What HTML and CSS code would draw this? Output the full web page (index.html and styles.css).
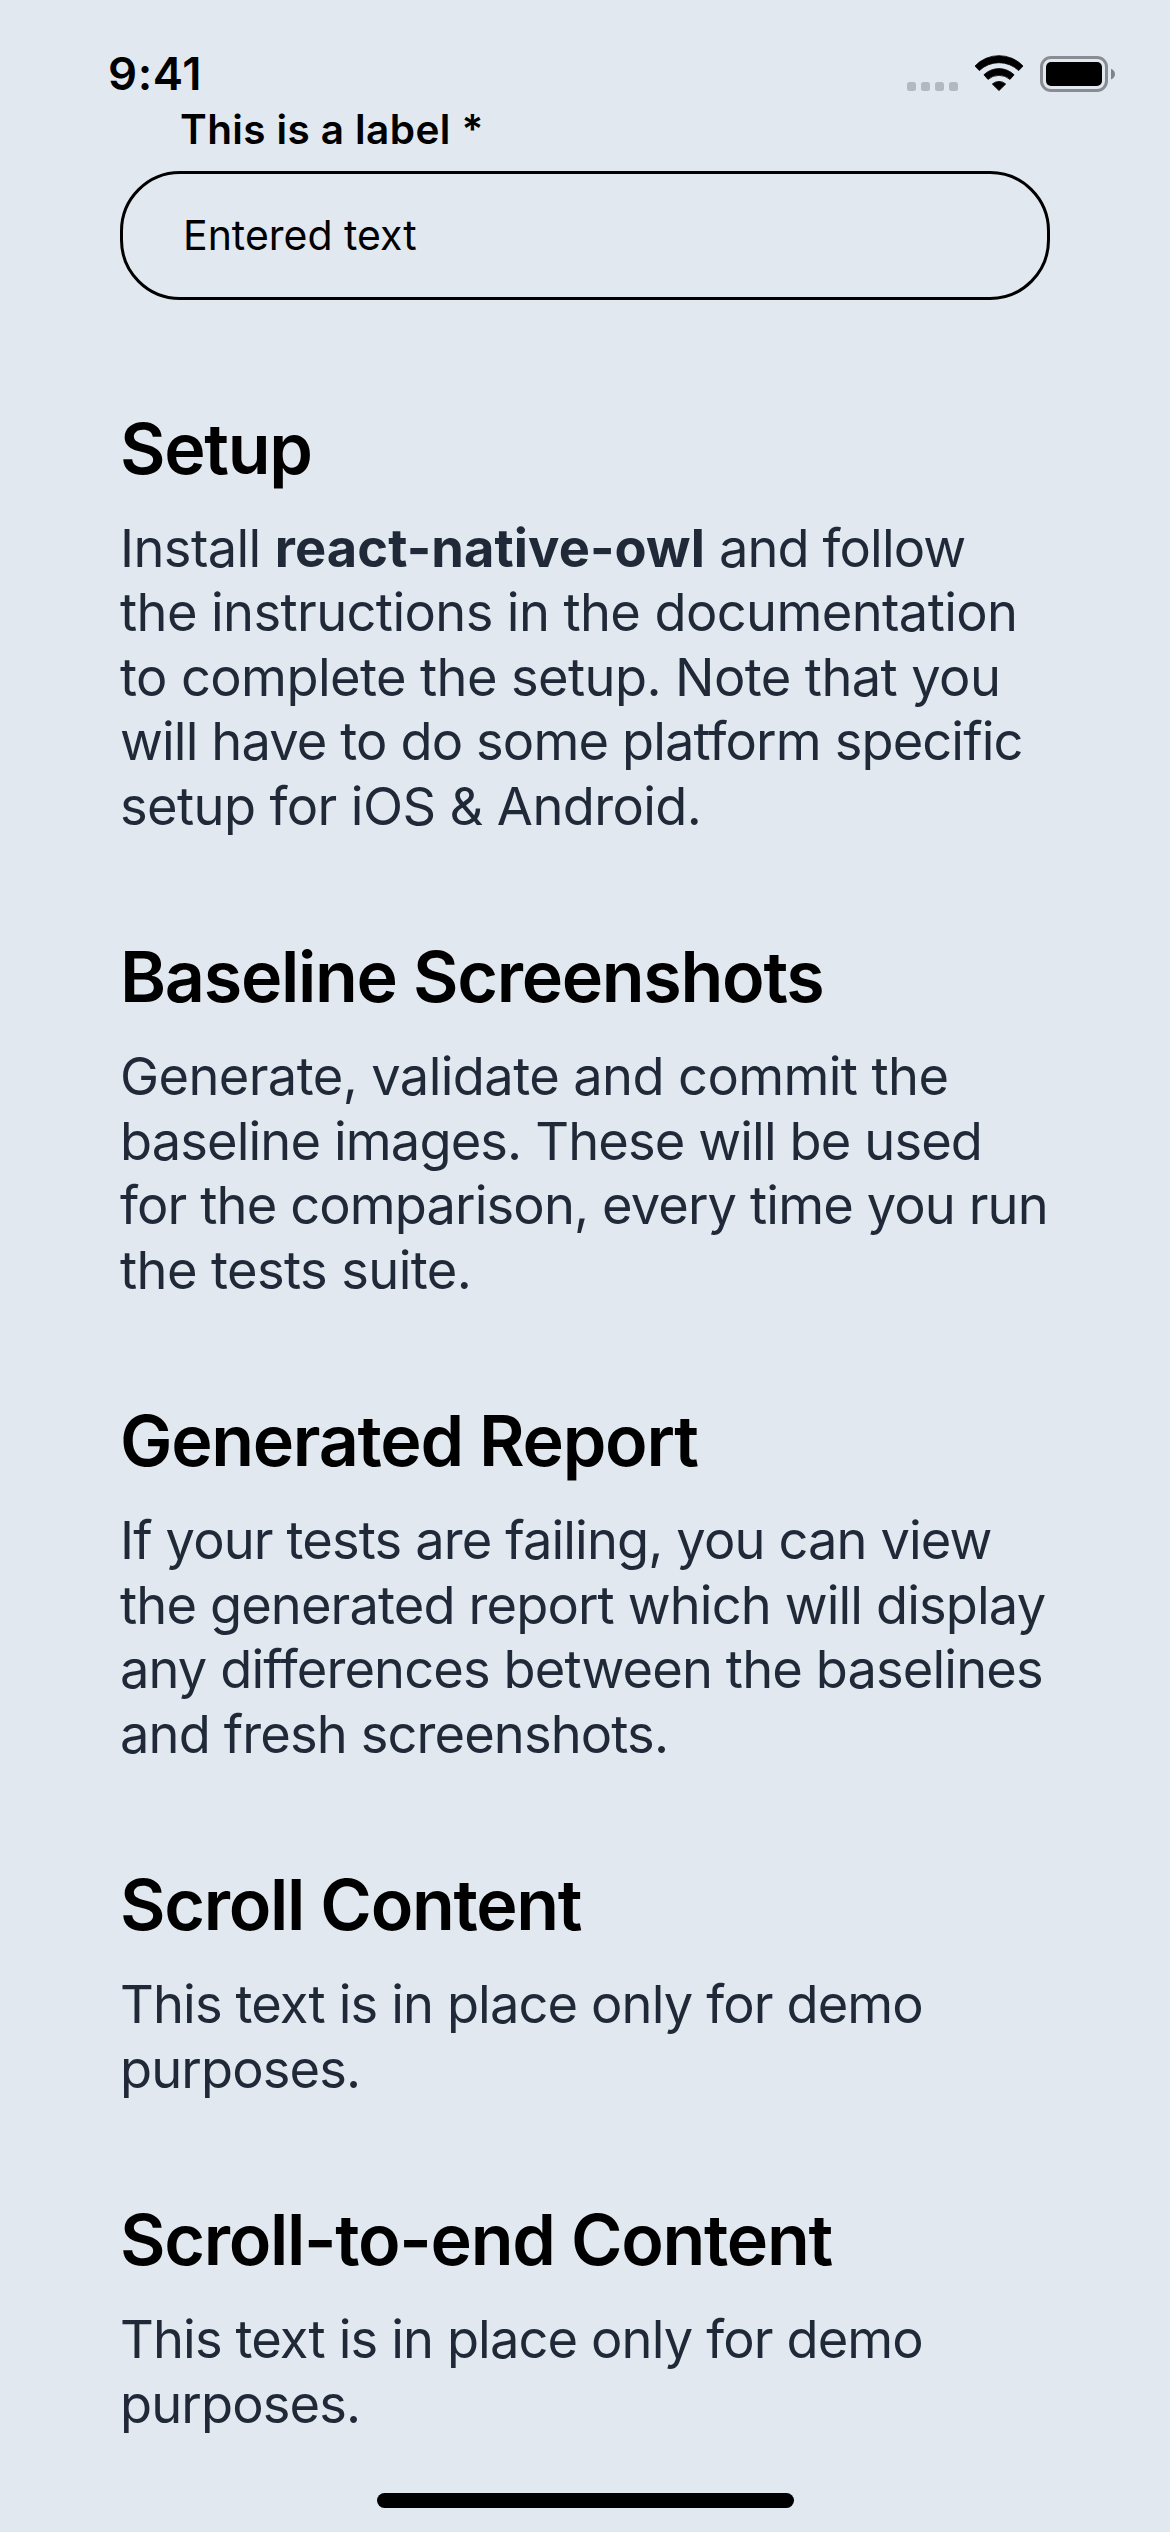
FILE: index.html
```html
<!DOCTYPE html>
<html lang="en">
<head>
<meta charset="utf-8">
<title>Owl Demo</title>
<link rel="stylesheet" href="styles.css">
</head>
<body>
<header class="status">
  <span class="time">9:41</span>
  <svg class="indicators" width="210" height="42" viewBox="0 0 210 42" aria-hidden="true">
    <g fill="#b4b9c1"><rect x="1" y="30" width="9" height="9" rx="2.500"/><rect x="15" y="30" width="9" height="9" rx="2.500"/><rect x="29" y="30" width="9" height="9" rx="2.500"/><rect x="43" y="30" width="9" height="9" rx="2.500"/></g>
    <g stroke="#000" stroke-width="0.800" stroke-linejoin="round">
      <path d="M69 14A33 33 0 0 1 117 14L112.700 18.600A28.500 28.500 0 0 0 73.300 18.600Z"/>
      <path d="M77.900 22.800A21.500 21.500 0 0 1 108.100 22.800L104 27.400A17 17 0 0 0 82 27.400Z"/>
      <path d="M86.300 32A10 10 0 0 1 99.700 32L93 38.600Z"/>
    </g>
    <rect x="135.500" y="5.500" width="65" height="33" rx="9.500" fill="none" stroke="#898d93" stroke-width="3"/>
    <rect x="140" y="10" width="56" height="24" rx="5"/>
    <path d="M205 16.700v10.800q4-1.800 4-5.400t-4-5.400z" fill="#80848a"/>
  </svg>
</header>
<main class="content">
  <label class="label" for="entry">This is a label *</label>
  <input class="field" id="entry" value="Entered text">
  <section class="section">
    <h2 class="title">Setup</h2>
    <p class="text"><span class="loose">Install </span><b>react-native-owl</b> and follow<br><span class="loose">the instructions in the documentation<br>to complete the setup. Note that you</span><br>will have to do some platform specific<br><span class="loose">setup for iOS &amp; Android.</span></p>
  </section>
  <section class="section">
    <h2 class="title">Baseline Screenshots</h2>
    <p class="text"><span class="loose">Generate, validate and commit the</span><br>baseline images. These will be used<br>for the comparison, every time you run<br><span class="loose">the tests suite.</span></p>
  </section>
  <section class="section">
    <h2 class="title">Generated Report</h2>
    <p class="text">If your tests are failing, you can view<br>the generated report which will display<br>any differences between the baselines<br>and fresh screenshots.</p>
  </section>
  <section class="section">
    <h2 class="title">Scroll Content</h2>
    <p class="text">This text is in place only for demo<br>purposes.</p>
  </section>
  <section class="section">
    <h2 class="title">Scroll-to-end Content</h2>
    <p class="text">This text is in place only for demo<br>purposes.</p>
  </section>
</main>
<div class="home"></div>
</body>
</html>
```
FILE: styles.css
```css
* { box-sizing: border-box; }
body {
  margin: 0;
  height: 2532px;
  overflow: hidden;
  display: flex;
  flex-direction: column;
  background: #e2e8f0;
  color: #000;
  font-family: Inter, sans-serif;
}
.status {
  height: 105px;
  padding: 52px 54px 0 108px;
  display: flex;
  justify-content: space-between;
  align-items: flex-start;
}
.time { font-size: 45.5px; line-height: 44px; font-weight: 600; letter-spacing: 0.6px; }
.content { flex: 1; padding: 0 120px; }
.label { display: block; margin-left: 60px; height: 66px; line-height: 50px; font-size: 40.5px; font-weight: 600; letter-spacing: 0.4px; }
.field {
  display: block;
  width: 930px;
  height: 129px;
  padding: 0 60px 1px;
  border: 3px solid #000;
  border-radius: 60px;
  background: transparent;
  font: 41px Inter, sans-serif;
  color: #000;
}
.section { padding-top: 96px; }
.field + .section { padding-top: 105.5px; }
.title { margin: 0 0 24px; height: 86px; font-size: 70px; line-height: 86px; font-weight: 600; letter-spacing: -1.3px; white-space: nowrap; }
.text { margin: 0; font-size: 52.4px; line-height: 64.5px; color: #1f2937; letter-spacing: -0.87px; white-space: nowrap; }
.text b { letter-spacing: 0.1px; }
.loose { letter-spacing: -0.6px; }
.home { width: 417px; height: 15px; margin: 0 0 24px 377px; border-radius: 8px; background: #000; }
```
